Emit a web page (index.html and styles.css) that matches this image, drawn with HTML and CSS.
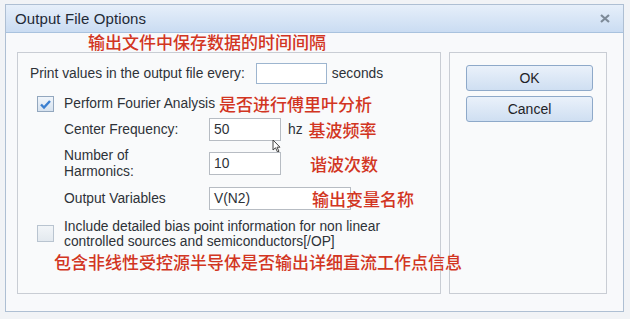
FILE: index.html
```html
<!DOCTYPE html>
<html>
<head>
<meta charset="utf-8">
<link rel="stylesheet" href="styles.css">
</head>
<body>
<div class="window">
  <div class="titlebar">
    <span class="title">Output File Options</span>
    <svg class="close" width="10" height="9" viewBox="0 0 10 9"><path d="M1 1 L9 8 M9 1 L1 8" stroke="#7d8a98" stroke-width="2.2" fill="none"/></svg>
  </div>
  <div class="body">
    <div class="note note-top">输出文件中保存数据的时间间隔</div>
    <div class="panels">
      <div class="group">
        <div class="row r1">
          <span class="lbl">Print values in the output file every:</span>
          <span class="input in-sec"></span>
          <span class="lbl unit-sec">seconds</span>
        </div>
        <div class="row r2 chk-row">
          <span class="cb checked"><svg width="13" height="11" viewBox="0 0 13 11"><path d="M2 5.5 L5 8.5 L11 2" stroke="#3a7fd0" stroke-width="2.4" fill="none"/></svg></span>
          <span class="lbl">Perform Fourier Analysis</span>
          <span class="note note-fourier">是否进行傅里叶分析</span>
        </div>
        <div class="row r3 sub-row">
          <span class="lbl sub-lbl">Center Frequency:</span>
          <span class="input in-small">50</span>
          <span class="lbl unit-hz">hz</span>
          <span class="note note-hz">基波频率</span>
          <svg class="cursor" width="9" height="14" viewBox="0 0 9 14"><path d="M1 1 L1 11 L3.5 8.8 L5.5 13 L7 12.3 L5 8.2 L8 8.2 Z" fill="#fff" stroke="#444" stroke-width="1"/></svg>
        </div>
        <div class="row r4 sub-row">
          <span class="lbl sub-lbl two">Number of<br>Harmonics:</span>
          <span class="input in-small">10</span>
          <span class="note note-harm">谐波次数</span>
        </div>
        <div class="row r5 sub-row">
          <span class="lbl sub-lbl">Output Variables</span>
          <span class="input in-wide">V(N2)</span>
          <span class="note note-var">输出变量名称</span>
        </div>
        <div class="row r6 chk-row">
          <span class="cb"></span>
          <span class="lbl tight">Include detailed bias point information for non linear<br>controlled sources and semiconductors[/OP]</span>
        </div>
        <div class="row r7">
          <span class="note note-bias">包含非线性受控源半导体是否输出详细直流工作点信息</span>
        </div>
      </div>
      <div class="side">
        <div class="btn">OK</div>
        <div class="btn">Cancel</div>
      </div>
    </div>
  </div>
</div>
</body>
</html>
```

FILE: styles.css
```css
html, body {
  margin: 0;
  padding: 0;
}
body {
  width: 630px;
  height: 319px;
  background: #f1f3f6;
  font-family: "Liberation Sans", Arial, sans-serif;
  color: #2e3238;
  overflow: hidden;
}
.window {
  position: relative;
  margin: 4px 0 0 5px;
  width: 617px;
  height: 306px;
  border: 1px solid #aebfd3;
  background: #f8f9fb;
}
.titlebar {
  height: 27px;
  border-bottom: 1px solid #a9c2de;
  background: linear-gradient(#e6effa, #cadcf2);
  display: flex;
  align-items: center;
  justify-content: space-between;
  padding: 0 13px 0 9px;
}
.title {
  font-size: 15px;
  color: #1f2a36;
  letter-spacing: 0.1px;
}
.close {
  display: block;
}
.body {
  padding: 0 14px 0 11px;
}
.note {
  font-family: "Noto Sans CJK SC", sans-serif;
  font-size: 17px;
  font-weight: 500;
  color: #d23522;
  line-height: 20px;
  white-space: nowrap;
}
.note-top {
  height: 20px;
  padding-left: 71px;
  margin-top: -1px;
}
.panels {
  display: flex;
  gap: 8px;
  height: 242px;
}
.group {
  width: 424px;
  border: 1px solid #c9cdd4;
  background: #f9fafb;
  padding: 9px 0 0 12px;
  box-sizing: border-box;
  height: 242px;
}
.side {
  width: 158px;
  border: 1px solid #c9cdd4;
  background: #f9fafb;
  box-sizing: border-box;
  height: 242px;
  padding: 12px 0 0 16px;
  display: flex;
  flex-direction: column;
  gap: 5px;
}
.btn {
  width: 125px;
  height: 24px;
  border: 1px solid #8ea9c9;
  border-radius: 3px;
  background: linear-gradient(#eaf1fa, #cfdff2);
  font-size: 14px;
  color: #1f2328;
  display: flex;
  align-items: center;
  justify-content: center;
}
.row {
  display: flex;
  align-items: center;
  position: relative;
  white-space: nowrap;
}
.lbl {
  font-size: 13.8px;
  line-height: 16px;
}
.lbl.tight {
  line-height: 15px;
}
.r1 { height: 23px; }
.r2 { height: 22px; margin-top: 8px; }
.r3 { height: 23px; margin-top: 3px; }
.r4 { height: 23px; margin-top: 11px; }
.r5 { height: 23px; margin-top: 12px; }
.r6 { height: 31px; margin-top: 8px; }
.r7 { height: 20px; padding: 3px 0 0 24px; }
.input {
  box-sizing: border-box;
  height: 23px;
  border: 1px solid #b7bcc3;
  background: #fff;
  font-size: 13.8px;
  line-height: 21px;
  padding-left: 4px;
  color: #2e3238;
}
.in-sec {
  width: 71px;
  height: 21px;
  margin-left: 11px;
  border-color: #9db5cf;
}
.unit-sec {
  margin-left: 5px;
}
.chk-row {
  padding-left: 7px;
}
.cb {
  box-sizing: border-box;
  width: 17px;
  height: 16px;
  border: 1px solid #93a7be;
  background: linear-gradient(#f0f5fb, #d6e2ef);
  margin-right: 10px;
  display: flex;
  align-items: center;
  justify-content: center;
}
.r6 .cb {
  width: 17px;
  height: 17px;
  border-color: #b9c4d0;
  background: linear-gradient(#f2f5f8, #e3e9ef);
}
.note-fourier {
  margin-left: 4px;
}
.sub-row {
  padding-left: 34px;
}
.sub-lbl {
  width: 145px;
}
.in-small {
  width: 72px;
}
.in-wide {
  width: 142px;
}
.unit-hz {
  margin-left: 7px;
}
.note-hz {
  margin-left: 6px;
}
.note-harm {
  margin-left: 29px;
}
.note-var {
  margin-left: -39px;
}
.cursor {
  position: absolute;
  left: 242px;
  top: 21px;
}
```
